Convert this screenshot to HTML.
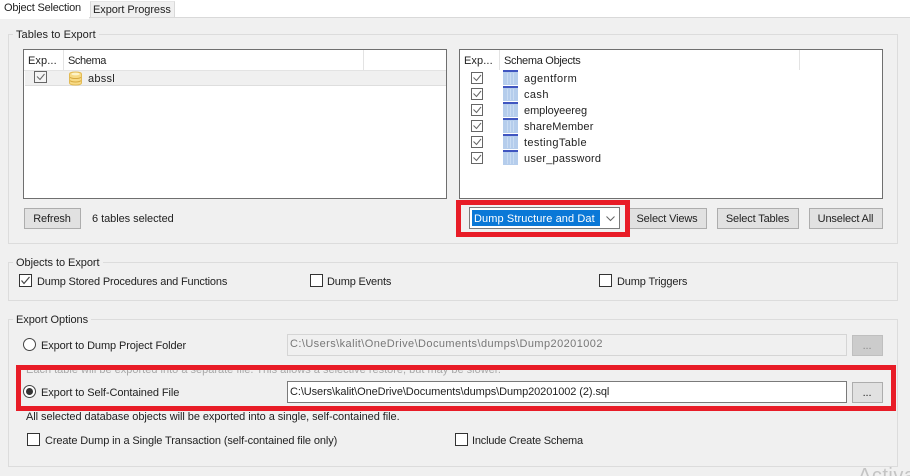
<!DOCTYPE html>
<html><head><meta charset="utf-8">
<style>
html,body{margin:0;padding:0}
#p{position:relative;width:910px;height:476px;overflow:hidden;background:#f0f0f0;font:11px "Liberation Sans",sans-serif;color:#222}
#p div{position:absolute;box-sizing:border-box}
.t{white-space:nowrap;line-height:14px;height:14px}
.g{border:1px solid #dcdcdc}
.l{background:#f0f0f0;padding:0 3px}
.list{background:#fff;border:1px solid #6f6f6f}
.b{background:#e1e1e1;border:1px solid #adadad;text-align:center;line-height:21px;color:#222;letter-spacing:-.15px;padding-right:1px}
.c{width:13px;height:13px;border:1px solid #333;background:#fff}
.k{width:12px;height:12px;border:1px solid #666;background:#fff}
.o{width:1px;background:#e3e3e3}
svg{position:absolute;overflow:visible}
.r{border:5px solid #e81c27}
</style></head><body><div id="p">
<!-- tabs -->
<div style="left:0;top:0;width:910px;height:17px;background:#fff"></div>
<div style="left:0;top:17px;width:910px;height:1px;background:#d9d9d9"></div>
<div style="left:0;top:17px;width:89px;height:2px;background:#fff"></div>
<div style="left:90px;top:1px;width:85px;height:17px;background:#f0f0f0;border:1px solid #d9d9d9;border-top-color:#e6e6e6"></div>
<div class="t" style="left:4px;top:1px;letter-spacing:-.2px">Object Selection</div>
<div class="t" style="left:93px;top:3px;letter-spacing:-.07px">Export Progress</div>

<!-- Tables to Export -->
<div class="g" style="left:8px;top:34px;width:890px;height:210px"></div>
<div class="t l" style="left:13px;top:28px;letter-spacing:.05px">Tables to Export</div>

<div class="list" style="left:23px;top:49px;width:424px;height:150px"></div>
<div class="o" style="left:63px;top:50px;height:20px"></div>
<div class="o" style="left:363px;top:50px;height:20px"></div>
<div style="left:24px;top:70px;width:422px;height:1px;background:#e3e3e3"></div>
<div style="left:25px;top:71px;width:421px;height:15px;background:#f0f0f0;border-bottom:1px solid #dedede"></div>
<div class="t" style="left:28px;top:54px;letter-spacing:.1px">Exp...</div>
<div class="t" style="left:68px;top:54px;letter-spacing:-.4px">Schema</div>
<div class="k" style="left:34px;top:71px;width:13px;background:#f4f4f4"></div>
<svg style="left:34px;top:71px" width="13" height="12"><path d="M3 5.5L6 8.5L10.5 3" fill="none" stroke="#666" stroke-width="1"/></svg>
<svg style="left:69px;top:71px" width="13" height="15"><path d="M.5 3C.5 .3 12.5 .3 12.5 3V12C12.5 14.7 .5 14.7 .5 12Z" fill="#f7da85" stroke="#e3bb55"/><path d="M1 6.2C3 8 10 8 12 6.2M1 9.6C3 11.4 10 11.4 12 9.6" fill="none" stroke="#d7aa40"/><ellipse cx="6.5" cy="3" rx="4.2" ry="1.4" fill="#fdf3c8"/></svg>
<div class="t" style="left:88px;top:72px;letter-spacing:.25px">abssl</div>

<div class="list" style="left:459px;top:49px;width:424px;height:150px"></div>
<div class="o" style="left:499px;top:50px;height:20px"></div>
<div class="o" style="left:799px;top:50px;height:20px"></div>
<div class="t" style="left:464px;top:54px;letter-spacing:.1px">Exp...</div>
<div class="t" style="left:504px;top:54px;letter-spacing:-.3px">Schema Objects</div>

<div class="k" style="left:471px;top:72px"></div>
<div class="k" style="left:471px;top:88px"></div>
<div class="k" style="left:471px;top:104px"></div>
<div class="k" style="left:471px;top:120px"></div>
<div class="k" style="left:471px;top:136px"></div>
<div class="k" style="left:471px;top:152px"></div>
<svg style="left:471px;top:72px" width="12" height="95" fill="none" stroke="#666"><path d="M2.5 5.5L5.5 8.5L10 3M2.5 21.5L5.5 24.5L10 19M2.5 37.5L5.5 40.5L10 35M2.5 53.5L5.5 56.5L10 51M2.5 69.5L5.5 72.5L10 67M2.5 85.5L5.5 88.5L10 83"/></svg>

<svg style="left:503px;top:70px" width="16" height="96">
<g><rect width="15" height="15" fill="#b5cdec"/><rect width="15" height="2" fill="#3f55c0"/><path d="M4.5 3V14M7.5 3V14M10.5 3V14" stroke="#c9dcf3"/></g>
<g transform="translate(0,16)"><rect width="15" height="15" fill="#b5cdec"/><rect width="15" height="2" fill="#3f55c0"/><path d="M4.5 3V14M7.5 3V14M10.5 3V14" stroke="#c9dcf3"/></g>
<g transform="translate(0,32)"><rect width="15" height="15" fill="#b5cdec"/><rect width="15" height="2" fill="#3f55c0"/><path d="M4.5 3V14M7.5 3V14M10.5 3V14" stroke="#c9dcf3"/></g>
<g transform="translate(0,48)"><rect width="15" height="15" fill="#b5cdec"/><rect width="15" height="2" fill="#3f55c0"/><path d="M4.5 3V14M7.5 3V14M10.5 3V14" stroke="#c9dcf3"/></g>
<g transform="translate(0,64)"><rect width="15" height="15" fill="#b5cdec"/><rect width="15" height="2" fill="#3f55c0"/><path d="M4.5 3V14M7.5 3V14M10.5 3V14" stroke="#c9dcf3"/></g>
<g transform="translate(0,80)"><rect width="15" height="15" fill="#b5cdec"/><rect width="15" height="2" fill="#3f55c0"/><path d="M4.5 3V14M7.5 3V14M10.5 3V14" stroke="#c9dcf3"/></g>
</svg>
<div class="t" style="left:524px;top:72px;letter-spacing:.4px">agentform</div>
<div class="t" style="left:524px;top:88px;letter-spacing:.4px">cash</div>
<div class="t" style="left:524px;top:104px;letter-spacing:-.05px">employeereg</div>
<div class="t" style="left:524px;top:120px;letter-spacing:.15px">shareMember</div>
<div class="t" style="left:524px;top:136px;letter-spacing:.35px">testingTable</div>
<div class="t" style="left:524px;top:152px;letter-spacing:.2px">user_password</div>

<div class="b" style="left:24px;top:208px;width:57px;height:21px">Refresh</div>
<div class="t" style="left:92px;top:212px;letter-spacing:-.05px">6 tables selected</div>

<div class="b" style="left:628px;top:208px;width:79px;height:21px">Select Views</div>
<div class="b" style="left:717px;top:208px;width:82px;height:21px">Select Tables</div>
<div class="b" style="left:809px;top:208px;width:74px;height:21px">Unselect All</div>

<div class="r" style="left:456px;top:200px;width:174px;height:37px;background:#f0f0f0"></div>
<div style="left:469px;top:207px;width:151px;height:22px;background:#fff;border:1px solid #7a7a7a"></div>
<div style="left:472px;top:210px;width:128px;height:16px;background:#0a78d7"></div>
<div class="t" style="left:474px;top:212px;color:#fff;letter-spacing:.1px">Dump Structure and Dat</div>
<svg style="left:606px;top:216px" width="10" height="6"><path d="M.5 .5L4.5 4.5L8.5 .5" fill="none" stroke="#666"/></svg>

<!-- Objects to Export -->
<div class="g" style="left:8px;top:262px;width:890px;height:39px"></div>
<div class="t l" style="left:13px;top:256px;letter-spacing:-.05px">Objects to Export</div>
<div class="c" style="left:19px;top:274px"></div>
<svg style="left:19px;top:274px" width="13" height="13"><path d="M2.5 6.5L5 9.5L10.5 3" fill="none" stroke="#444" stroke-width="1.2"/></svg>
<div class="t" style="left:37px;top:275px;letter-spacing:-.17px">Dump Stored Procedures and Functions</div>
<div class="c" style="left:310px;top:274px"></div>
<div class="t" style="left:327px;top:275px;letter-spacing:-.17px">Dump Events</div>
<div class="c" style="left:599px;top:274px"></div>
<div class="t" style="left:617px;top:275px;letter-spacing:-.15px">Dump Triggers</div>

<!-- Export Options -->
<div class="g" style="left:8px;top:319px;width:890px;height:148px"></div>
<div class="t l" style="left:13px;top:313px;letter-spacing:-.05px">Export Options</div>
<div style="left:23px;top:338px;width:13px;height:13px;border:1px solid #444;border-radius:50%;background:#fff"></div>
<div class="t" style="left:41px;top:339px;letter-spacing:-.1px">Export to Dump Project Folder</div>
<div style="left:287px;top:334px;width:560px;height:22px;background:#f0f0f0;border:1px solid #d5d5d5"></div>
<div class="t" style="left:290px;top:337px;color:#777;letter-spacing:.42px">C:\Users\kalit\OneDrive\Documents\dumps\Dump20201002</div>
<div class="b" style="left:852px;top:335px;width:31px;height:21px;background:#cccccc;border-color:#bfbfbf;color:#888">...</div>

<div class="t" style="left:26px;top:363px;color:#a8a8a8">Each table will be exported into a separate file. This allows a selective restore, but may be slower.</div>
<div class="r" style="left:16px;top:365px;width:880px;height:46px"></div>
<div style="left:23px;top:385px;width:13px;height:13px;border:1px solid #444;border-radius:50%;background:#fff"></div>
<div style="left:26px;top:388px;width:7px;height:7px;border-radius:50%;background:#333"></div>
<div class="t" style="left:41px;top:386px;letter-spacing:-.08px">Export to Self-Contained File</div>
<div style="left:287px;top:381px;width:560px;height:22px;background:#fff;border:1px solid #7a7a7a"></div>
<div class="t" style="left:290px;top:385px;letter-spacing:-.09px">C:\Users\kalit\OneDrive\Documents\dumps\Dump20201002 (2).sql</div>
<div class="b" style="left:852px;top:382px;width:31px;height:21px;color:#222">...</div>

<div class="t" style="left:26px;top:410px;letter-spacing:-.06px">All selected database objects will be exported into a single, self-contained file.</div>
<div class="c" style="left:27px;top:433px"></div>
<div class="t" style="left:45px;top:434px;letter-spacing:-.11px">Create Dump in a Single Transaction (self-contained file only)</div>
<div class="c" style="left:455px;top:433px"></div>
<div class="t" style="left:472px;top:434px;letter-spacing:-.19px">Include Create Schema</div>

<div class="t" style="left:858px;top:464px;font-size:20px;line-height:24px;height:24px;color:#c4c4c4;letter-spacing:.5px">Activa</div>
</div></body></html>
